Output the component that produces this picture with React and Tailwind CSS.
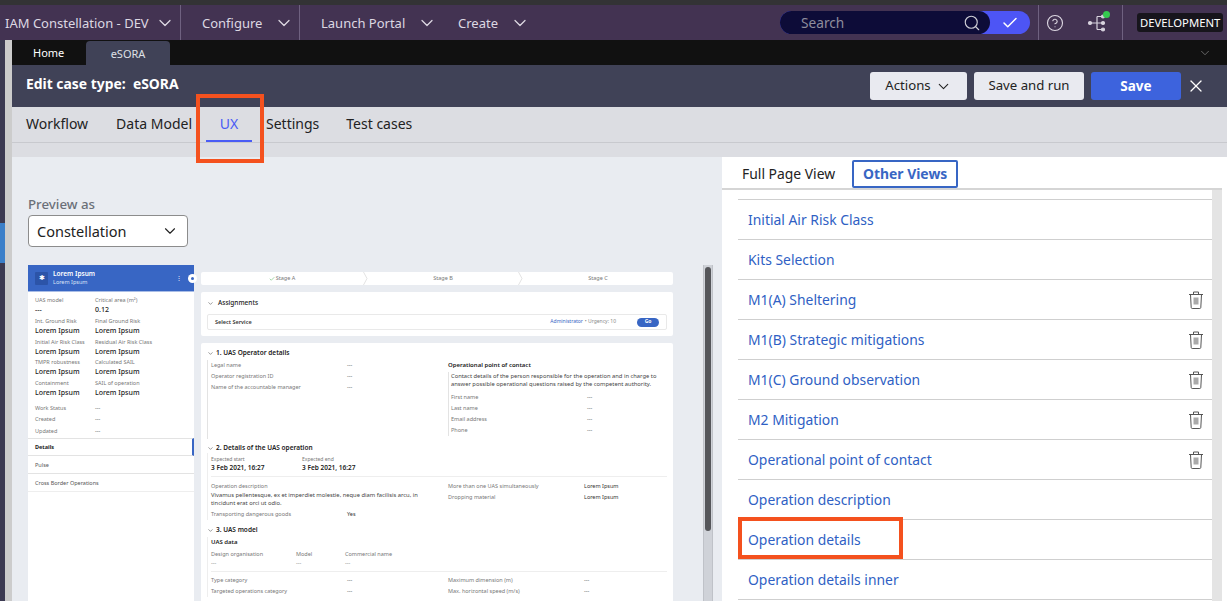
import React from "react";
import { ChevronDown, Search, Check, X, CircleHelp } from "lucide-react";

const navItems = [
  { label: "IAM Constellation - DEV", box: "w-[181px] pl-[5px] gap-[6px] border-r border-[#6f6180]" },
  { label: "Configure", box: "w-[119px] pl-[21px] gap-[12px] border-r border-[#6f6180]" },
  { label: "Launch Portal", box: "w-[158px] pl-[21px] gap-[12px]" },
  { label: "Create", box: "w-[90px] gap-[12px]" },
];

const caseTabs = [
  { label: "Workflow", box: "mr-[28px]" },
  { label: "Data Model", box: "mr-[14px]" },
  { label: "UX", box: "mr-[14px] w-[46px] justify-center text-[#4a5cf5]", active: true },
  { label: "Settings", box: "mr-[27px]" },
  { label: "Test cases", box: "" },
];

const views = [
  { name: "Initial Air Risk Class" },
  { name: "Kits Selection" },
  { name: "M1(A) Sheltering", trash: true },
  { name: "M1(B) Strategic mitigations", trash: true },
  { name: "M1(C) Ground observation", trash: true },
  { name: "M2 Mitigation", trash: true },
  { name: "Operational point of contact", trash: true },
  { name: "Operation description" },
  { name: "Operation details" },
  { name: "Operation details inner" },
];

const summary = [
  ["UAS model", "---", "Critical area (m²)", "0.12"],
  ["Int. Ground Risk", "Lorem Ipsum", "Final Ground Risk", "Lorem Ipsum"],
  ["Initial Air Risk Class", "Lorem Ipsum", "Residual Air Risk Class", "Lorem Ipsum"],
  ["TMPR robustness", "Lorem Ipsum", "Calculated SAIL", "Lorem Ipsum"],
  ["Containment", "Lorem Ipsum", "SAIL of operation", "Lorem Ipsum"],
];

const TrashIcon = () => (
  <svg width="16" height="20" viewBox="0 0 16 20" fill="none" stroke="#555" strokeWidth="1">
    <path d="M1 4.5h14" />
    <path d="M5.5 4V2h5v2" />
    <path d="M2.5 4.5l.7 13c0 .6.5 1 1 1h7.600c.5 0 1-.4 1-1l.7-13" />
    <rect x="5.5" y="7.5" width="5" height="7" fill="#aaa" stroke="none" />
  </svg>
);

const FlowIcon = () => (
  <svg width="22" height="22" viewBox="0 0 22 22" fill="none" stroke="#d8d3de" strokeWidth="1.2">
    <path d="M3 11h13M10 4.500h6M10 17.500h6M10 4.500v13" />
    <circle cx="3" cy="11" r="1.500" fill="#d8d3de" />
    <circle cx="16" cy="4.500" r="1.500" fill="#d8d3de" />
    <circle cx="16" cy="11" r="1.500" fill="#d8d3de" />
    <circle cx="16" cy="17.500" r="1.500" fill="#d8d3de" />
  </svg>
);

const StageChevron = () => (
  <svg width="5" height="13" viewBox="0 0 5 13" fill="none" stroke="#dcdcdc" strokeWidth="0.8" className="shrink-0">
    <path d="M0.500 0l3.500 6.500l-3.500 6.500" />
  </svg>
);

// tiny label / value pair of the preview's side card
const SummaryField = ({ label, value }) => (
  <div>
    <div className="text-[5.5px] leading-[9px] text-[#777]">{label}</div>
    <div className="text-[7px] leading-[10px] font-medium text-[#222]">{value}</div>
  </div>
);

const Row = ({ label, value, valueClass = "text-[#444]" }) => (
  <div className="flex h-[11px] items-center whitespace-nowrap">
    <div className="w-[136px] shrink-0 text-[5.5px] text-[#777]">{label}</div>
    <div className={`text-[5.5px] ${valueClass}`}>{value}</div>
  </div>
);

const SectionTitle = ({ children }) => (
  <div className="flex h-[10px] items-center gap-[2px] text-[6.500px] font-semibold text-[#222]">
    <ChevronDown size={7} strokeWidth={1.5} />
    {children}
  </div>
);

const SideCard = () => (
  <div className="relative flex h-[336px] w-[166px] shrink-0 flex-col bg-white">
    <div className="flex h-[27px] items-center border-b border-[#a9bde6] bg-[#3866c4] pl-[7px] text-white">
      <div className="flex h-[13px] w-[13px] items-center justify-center rounded-[1px] bg-[#2c54a8] text-[7px]">✱</div>
      <div className="ml-[5px] flex-1">
        <div className="text-[6.500px] leading-[8px] font-semibold">Lorem Ipsum</div>
        <div className="text-[5.500px] leading-[9px] text-[#dbe4f6]">Lorem Ipsum</div>
      </div>
      <div className="mr-[12px] text-[6px] leading-none">⋮</div>
    </div>
    <div className="absolute top-[9px] -right-[3px] flex h-[9px] w-[9px] items-center justify-center rounded-full bg-white">
      <div className="h-[3px] w-[3px] rounded-full bg-[#3866c4]" />
    </div>
    <div className="flex flex-col gap-[1px] px-[7px] pt-[4px]">
      {summary.map((r) => (
        <div key={r[0]} className="grid h-[19.800px] grid-cols-[60px_60px] whitespace-nowrap">
          <SummaryField label={r[0]} value={r[1]} />
          <SummaryField label={r[2]} value={r[3]} />
        </div>
      ))}
    </div>
    <div className="flex flex-col px-[7px] pt-[3px]">
      {["Work Status", "Created", "Updated"].map((l) => (
        <div key={l} className="flex h-[11.500px] items-center text-[5.500px] text-[#777]">
          <div className="w-[60px]">{l}</div>
          <div className="text-[#444]">---</div>
        </div>
      ))}
    </div>
    <div className="mt-[2px] flex h-[18px] items-center border-y border-r-2 border-[#e3e3e3] border-r-[#3866c4] pl-[7px] text-[5.500px] font-bold text-[#222]">
      Details
    </div>
    <div className="flex h-[18px] items-center border-b border-[#e3e3e3] pl-[7px] text-[5.500px] text-[#555]">Pulse</div>
    <div className="flex h-[18px] items-center border-b border-[#eee] pl-[7px] text-[5.500px] text-[#555]">
      Cross Border Operations
    </div>
  </div>
);

const StageBar = () => (
  <div className="mt-[7px] flex h-[13px] items-center rounded-[2px] bg-white text-[5.500px] text-[#777]">
    <div className="flex w-[162px] items-center justify-center gap-[1px]">
      <Check size={6} className="text-[#4caf50]" />
      Stage A
    </div>
    <StageChevron />
    <div className="w-[150px] text-center">Stage B</div>
    <StageChevron />
    <div className="flex-1 text-center">Stage C</div>
  </div>
);

const Assignments = () => (
  <div className="mt-[7px] h-[44px] rounded-[2px] bg-white px-[6px] pt-[6px]">
    <SectionTitle>
      <span className="ml-[2px] font-medium">Assignments</span>
    </SectionTitle>
    <div className="mt-[6px] flex h-[16px] items-center rounded-[2px] border border-[#e9e9e9] pr-[7px] pl-[7px] text-[5px]">
      <span className="text-[5.500px] font-semibold text-[#333]">Select Service</span>
      <span className="ml-auto text-[#3866c4]">Administrator</span>
      <span className="ml-[2px] text-[#888]">• Urgency: 10</span>
      <span className="ml-[21px] flex h-[9px] w-[22px] items-center justify-center rounded-full bg-[#3866c4] font-bold text-white">
        Go
      </span>
    </div>
  </div>
);

const DetailsCard = () => (
  <div className="mt-[7px] h-[258px] overflow-hidden rounded-t-[2px] bg-white px-[6px] pt-[5px]">
    <SectionTitle>1. UAS Operator details</SectionTitle>
    <div className="mt-[2px] grid h-[79px] grid-cols-[241px_1fr]">
      <div className="border-l border-[#e3e3e3] pl-[3px]">
        <Row label="Legal name" value="---" />
        <Row label="Operator registration ID" value="---" />
        <Row label="Name of the accountable manager" value="---" />
      </div>
      <div>
        <div className="text-[6px] leading-[11px] font-semibold text-[#222]">Operational point of contact</div>
        <div className="mt-[1px] border-l border-[#e3e3e3] pl-[2px]">
          <div className="text-[5.800px] leading-[8px] whitespace-nowrap text-[#444]">
            Contact details of the person responsible for the operation and in charge to
            <br />
            answer possible operational questions raised by the competent authority.
          </div>
          <div className="mt-[4px]">
            <Row label="First name" value="---" />
            <Row label="Last name" value="---" />
            <Row label="Email address" value="---" />
            <Row label="Phone" value="---" />
          </div>
        </div>
      </div>
    </div>
    <div className="mt-[4px]">
      <SectionTitle>2. Details of the UAS operation</SectionTitle>
    </div>
    <div className="border-l border-[#eee] pl-[3px]">
      <div className="flex h-[20px] items-end pb-[1px] whitespace-nowrap">
        <div className="w-[91px]">
          <div className="text-[5px] leading-[8px] text-[#777]">Expected start</div>
          <div className="text-[6.500px] leading-[9px] font-semibold text-[#222]">3 Feb 2021, 16:27</div>
        </div>
        <div>
          <div className="text-[5px] leading-[8px] text-[#777]">Expected end</div>
          <div className="text-[6.500px] leading-[9px] font-semibold text-[#222]">3 Feb 2021, 16:27</div>
        </div>
      </div>
      <div className="mt-[3px] grid grid-cols-[237px_1fr] border-t border-[#eee] pt-[5px]">
        <div>
          <div className="text-[5.500px] leading-[9px] text-[#777]">Operation description</div>
          <div className="w-[225px] text-[5.800px] leading-[8px] text-[#444]">
            Vivamus pellentesque, ex et imperdiet molestie, neque diam facilisis arcu, in tincidunt erat orci ut odio.
          </div>
          <div className="mt-[2px]">
            <Row label="Transporting dangerous goods" value="Yes" valueClass="text-[#333]" />
          </div>
        </div>
        <div className="-mt-[1px]">
          <Row label="More than one UAS simultaneously" value="Lorem Ipsum" valueClass="text-[#333]" />
          <Row label="Dropping material" value="Lorem Ipsum" valueClass="text-[#333]" />
        </div>
      </div>
    </div>
    <div className="mt-[5px]">
      <SectionTitle>3. UAS model</SectionTitle>
    </div>
    <div className="border-l border-[#eee] pl-[3px]">
      <div className="mt-[2px] text-[6px] leading-[11px] font-semibold text-[#222]">UAS data</div>
      <div className="mt-[2px] flex h-[19px] text-[5.500px] leading-[9px] text-[#777]">
        <div className="w-[85px]">Design organisation<div>---</div></div>
        <div className="w-[49px]">Model<div>---</div></div>
        <div>Commercial name<div>---</div></div>
      </div>
      <div className="mt-[2px] grid grid-cols-[237px_1fr] border-t border-[#eee] pt-[3px]">
        <div>
          <Row label="Type category" value="---" />
          <Row label="Targeted operations category" value="---" />
        </div>
        <div>
          <Row label="Maximum dimension (m)" value="---" />
          <Row label="Max. horizontal speed (m/s)" value="---" />
        </div>
      </div>
    </div>
  </div>
);

const App = () => {
  return (
    <div className="relative flex h-[601px] w-[1227px] flex-col overflow-hidden bg-white font-['Noto_Sans',sans-serif]">
      <div className="h-[5px] shrink-0 bg-[#333335]" />

      {/* top nav */}
      <div className="flex h-[35px] shrink-0 items-center bg-[#433352] text-[13px] whitespace-nowrap text-[#ddd8e2]">
        {navItems.map((n) => (
          <div key={n.label} className={`flex h-full shrink-0 items-center ${n.box}`}>
            <span className="pt-[2px]">{n.label}</span>
            <ChevronDown size={20} strokeWidth={1.5} />
          </div>
        ))}
        <div className="ml-[232px] flex h-[23px] w-[250px] shrink-0 items-center rounded-full bg-[#4d55f5]">
          <div className="flex h-full w-[210px] items-center justify-between rounded-full bg-[#0d0c38] pr-[9px] pl-[21px] text-[13.700px] text-[#8f8d9d]">
            <span className="pt-[2px]">Search</span>
            <Search size={18} strokeWidth={1.5} className="text-[#cfcfd6]" />
          </div>
          <Check size={18} strokeWidth={2} className="ml-[11px] text-white" />
        </div>
        <div className="ml-[8px] flex h-full w-[85px] shrink-0 items-center border-x border-[#6f6180]">
          <CircleHelp size={18} strokeWidth={1.5} className="ml-[7px]" />
          <div className="relative ml-[23px]">
            <FlowIcon />
            <div className="absolute -top-[1px] -right-[1px] h-[7px] w-[7px] rounded-full bg-[#35c94f]" />
          </div>
        </div>
        <div className="ml-[14px] shrink-0 rounded-[3px] bg-[#17151c] px-[3px] text-[11.300px] leading-[19px] text-white">
          DEVELOPMENT
        </div>
      </div>

      <div className="flex min-h-0 flex-1">
        {/* left edge */}
        <div className="flex w-[5px] shrink-0 flex-col bg-[#3c3a52]">
          <div className="mt-[183px] h-[40px] bg-[#3b7fc9]" />
        </div>
        <div className="w-[7px] shrink-0 bg-[#cccccc]" />

        <div className="flex min-w-0 flex-1 flex-col">
          {/* portal tabs */}
          <div className="flex h-[25px] shrink-0 items-center bg-[#111111] text-[11px]">
            <div className="w-[74px] pt-[1px] pl-[21px] text-white">Home</div>
            <div className="flex h-[24px] w-[84px] items-center justify-center self-end rounded-t-[4px] bg-[#404257] pt-[2px] text-[#dfe0e6]">
              eSORA
            </div>
            <ChevronDown size={14} strokeWidth={1.2} className="mr-[15px] ml-auto text-[#8a8a8a]" />
          </div>

          {/* case type header */}
          <div className="flex h-[42px] shrink-0 items-center bg-[#404257] pr-[21px] pl-[14px] text-[13.200px]">
            <span className="pb-[3px] text-[13.900px] font-bold text-white">Edit case type:&nbsp; eSORA</span>
            <button className="ml-auto flex h-[28px] w-[97px] items-center justify-center gap-[4px] rounded-[3px] bg-[#e9eaf0] text-[#222]">
              Actions
              <ChevronDown size={17} strokeWidth={1.5} />
            </button>
            <button className="ml-[7px] h-[28px] w-[110px] rounded-[3px] bg-[#e9eaf0] text-[#222]">Save and run</button>
            <button className="ml-[7px] h-[28px] w-[90px] rounded-[3px] bg-[#3d63dd] text-[13.500px] font-bold text-white">
              Save
            </button>
            <X size={20} strokeWidth={1.5} className="ml-[5px] text-white" />
          </div>

          {/* case type tabs */}
          <div className="flex h-[50px] shrink-0 flex-col bg-[#dcdde2]">
            <div className="flex h-[36px] items-center border-b border-[#c8c9ce] pl-[14px] text-[14px] text-[#222]">
              {caseTabs.map((t) => (
                <div key={t.label} className={`relative flex h-full items-center pb-[3px] ${t.box}`}>
                  {t.label}
                  {t.active && <div className="absolute inset-x-0 bottom-0 h-[2px] bg-[#4a5cf5]" />}
                </div>
              ))}
            </div>
          </div>

          <div className="flex min-h-0 flex-1">
            {/* preview */}
            <div className="flex w-[710px] shrink-0 flex-col bg-[#e9ecf1] pl-[16px]">
              <div className="mt-[38px] text-[13.300px] leading-[18px] font-medium text-[#6b7078]">Preview as</div>
              <div className="mt-[2px] flex h-[32px] w-[160px] items-center justify-between rounded-[4px] border border-[#8c8c8c] bg-white pr-[8px] pl-[8px] text-[14.500px] text-[#222]">
                <span className="pt-[2px]">Constellation</span>
                <ChevronDown size={18} strokeWidth={1.5} />
              </div>
              <div className="mt-[18px] flex min-h-0 flex-1">
                <SideCard />
                <div className="ml-[7px] w-[472px] shrink-0">
                  <StageBar />
                  <Assignments />
                  <DetailsCard />
                </div>
                <div className="ml-[30px] w-[10px] border-x border-[#bfc2c8] bg-[#cfd2d8] px-[1px] pt-[2px]">
                  <div className="h-[264px] rounded-[3px] bg-[#55565a]" />
                </div>
              </div>
            </div>

            {/* views panel */}
            <div className="flex w-[500px] min-w-0 flex-col bg-white">
              <div className="flex h-[33px] shrink-0 items-center border-b-2 border-[#d5d5d5] pt-[2px] pl-[20px] text-[13.900px] text-[#222]">
                <span className="pt-[2px]">Full Page View</span>
                <div className="ml-[17px] flex h-[28px] w-[106px] items-center justify-center rounded-[2px] border-2 border-[#3866c4] pt-[1px] font-bold text-[#3866c4]">
                  Other Views
                </div>
              </div>
              <div className="flex min-h-0 flex-1">
                <div className="mt-[9px] ml-[16px] flex min-h-0 flex-1 flex-col border-t border-[#cfcfcf]">
                  {views.map((v) => (
                    <div
                      key={v.name}
                      className="flex h-[40px] shrink-0 items-center justify-between border-b border-[#cfcfcf] pr-[8px] pl-[10px] text-[13.900px] text-[#2f5fc4]"
                    >
                      <span className="pt-[2px]">{v.name}</span>
                      {v.trash && <TrashIcon />}
                    </div>
                  ))}
                </div>
                <div className="w-[10px] shrink-0 bg-[#e4e4e4]" />
              </div>
            </div>
          </div>
        </div>
      </div>

      {/* red annotation boxes */}
      <div className="absolute top-[94px] left-[196px] h-[69px] w-[68px] border-[4px] border-[#f4511e]" />
      <div className="absolute top-[517px] left-[738px] h-[42px] w-[165px] border-[4px] border-[#f4511e]" />
    </div>
  );
};

export default App;
